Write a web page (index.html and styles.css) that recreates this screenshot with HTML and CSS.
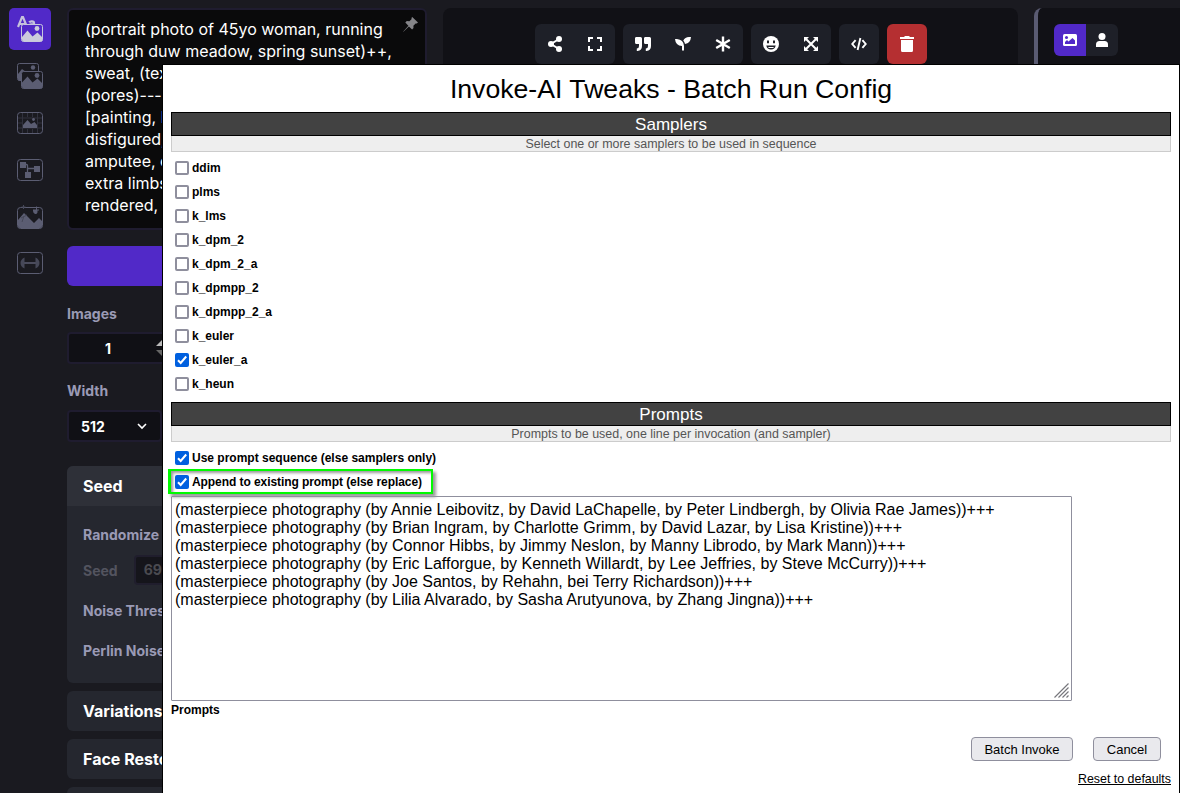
FILE: index.html
```html
<!DOCTYPE html>
<html lang="en">
<head>
<meta charset="utf-8">
<title>Invoke-AI Tweaks</title>
<link rel="stylesheet" href="styles.css">
</head>
<body>
<div class="app">
  <nav class="tabs">
    <div class="tab active"><svg width="26" height="26" viewBox="0 0 26 26"><g fill="none" stroke="#c5c2dc" stroke-width="2.200"><path d="M1 11 5 1.200h1L10 11M2.300 8h6"/><path d="M12.200 6.400c1-1.500 4.800-1.400 4.800.5v3M16.500 8c-2 0-4.500.2-4.500 1.600"/></g><rect x="4.500" y="8.500" width="21" height="17" rx="2" fill="#5129c8" stroke="#c5c5dd"/><path d="M5 21l5.500-6.500 5 6 5-4 5 5v2q0 2-2 2H7q-2 0-2-2z" fill="#cbcbdc"/><circle cx="20" cy="12.500" r="2.400" fill="#cbcbdc"/></svg></div>
    <div class="tab"><svg width="26" height="26" viewBox="0 0 26 26"><rect x=".5" y=".5" width="21" height="17" rx="2" fill="none" stroke="#5b5d72"/><path d="M1 11l4-5 4 3v9H3q-2 0-2-2z" fill="#5b5d72"/><circle cx="16" cy="4.500" r="2.200" fill="#5b5d72"/><rect x="4.500" y="8.500" width="21" height="17" rx="2" fill="#1a1a20" stroke="#5b5d72"/><path d="M5 19.500l5.500-6 5 6 5-4 5 5v3q0 2-2 2H7q-2 0-2-2z" fill="#5b5d72"/><circle cx="20" cy="12.500" r="2.400" fill="#5b5d72"/></svg></div>
    <div class="tab"><svg width="26" height="22" viewBox="0 0 26 22"><rect x=".5" y=".5" width="25" height="21" rx="3" fill="none" stroke="#5b5d72"/><path d="M1 6h24M1 16h24M5.500 1v20M20.500 1v20M10.500 1v4M15.500 1v4M10.500 17v4M15.500 17v4M1 11h4M21 11h4" stroke="#30313d" fill="none"/><path d="M6 13l4.500-5 3.500 4 3.500-2 2.500 3v3H6z" fill="#5b5d72"/><circle cx="16.500" cy="7.500" r="1.400" fill="#5b5d72"/></svg></div>
    <div class="tab low"><svg width="26" height="22" viewBox="0 0 26 22"><rect x=".5" y=".5" width="25" height="21" rx="3" fill="none" stroke="#5b5d72"/><path d="M8 5.500h1.500q1 0 1 1V14M10.500 9.500h8" fill="none" stroke="#5b5d72" stroke-width="1.300"/><path d="M3 3h6v6H3zM17 7h6v6h-6zM8 13h6v6H8z" fill="#5b5d72"/></svg></div>
    <div class="tab low"><svg width="26" height="24" viewBox="0 0 26 24"><rect x=".5" y="2.500" width="25" height="21" rx="3" fill="none" stroke="#5b5d72"/><path d="M1 15l6-7 4 4 6 6 5-5 3 3v5q0 2-2 2H3q-2 0-2-2zM16 4.500h3V1.500h1v3h2v1h-1.500v2q-.8 2-2.500 1.500-2-1-2-3z" fill="#5b5d72"/><path d="M6.500 0v4M4.500 2h4M4 13l6-3M5 17l2-6" stroke="#464858" fill="none"/></svg></div>
    <div class="tab"><svg width="26" height="22" viewBox="0 0 26 22"><rect x=".5" y=".5" width="25" height="21" rx="3" fill="none" stroke="#5b5d72"/><path d="M7 11h12" stroke="#4b4c5d" stroke-width="2"/><path d="M7.500 5.500q-4 2-4 5.500t4 5.500zM18.500 5.500q4 2 4 5.500t-4 5.500z" fill="#464858"/></svg></div>
  </nav>

  <section class="options">
    <div class="prompt">
      <div class="prompt-text">(portrait photo of 45yo woman, running<br>through duw meadow, spring sunset)++,<br>sweat, (tex<br>(pores)----<br>[painting, <span class="link">b</span><br>disfigured,<br>amputee, e<br>extra limbs<br>rendered,</div>
      <svg class="pin" width="15" height="15" viewBox="0 0 15 15"><path d="M9.200 0 15 5.600l-1.300 1-1.100-.2-2.200 2.300.1 2.400-1.400 1.400-3.200-3.100L.7 14.500 0 15l.5-.8 4.900-5.500L2.300 5.600l1.500-1.500 2.600.2 2.300-2.200-.3-1.200z" fill="#858589"/></svg>
    </div>
    <div class="invoke"></div>
    <div class="label images-label">Images</div>
    <div class="number"><span>1</span><svg width="12" height="16" viewBox="0 0 12 16"><path d="M0 6l6-6 6 6z" fill="#bbb"/><path d="M0 10h12l-6 6z" fill="#666"/></svg></div>
    <div class="label width-label">Width</div>
    <div class="select"><span>512</span><svg width="10" height="7" viewBox="0 0 10 7"><path d="M1 1l4 4 4-4" fill="none" stroke="#fff" stroke-width="1.600"/></svg></div>
    <div class="card seed">
      <div class="card-head">Seed</div>
      <div class="card-body">
        <div class="row">Randomize</div>
        <div class="row dim">Seed<span class="seed-input">69</span></div>
        <div class="row">Noise Thres</div>
        <div class="row">Perlin Noise</div>
      </div>
    </div>
    <div class="card fold">Variations</div>
    <div class="card fold">Face Resto</div>
    <div class="card fold"></div>
  </section>

  <section class="viewer">
    <div class="group">
      <span class="btn"><svg width="16" height="16" viewBox="0 0 16 16"><path d="M12 3 4 8l8 5" fill="none" stroke="#fff" stroke-width="2"/><g fill="#fff"><circle cx="12" cy="3" r="3"/><circle cx="4" cy="8" r="3"/><circle cx="12" cy="13" r="3"/></g></svg></span>
      <span class="btn"><svg width="16" height="16" viewBox="0 0 16 16"><path d="M2 6V2h4M10 2h4v4M14 10v4h-4M6 14H2v-4" fill="none" stroke="#fff" stroke-width="2"/></svg></span>
    </div>
    <div class="group">
      <span class="btn"><svg width="16" height="16" viewBox="0 0 16 16"><path d="M1 1h4.500q1.500 0 1.500 1.500V10q0 4.500-4.500 5h-.7v-2.500Q4 12.500 4 10V8H1.500Q0 8 0 6.500v-4Q0 1 1 1zM10 1h4.500Q16 1 16 2.500V10q0 4.500-4.500 5h-.7v-2.500q2.200 0 2.200-2.500V8h-2.500Q9 8 9 6.500v-4Q9 1 10 1z" fill="#fff"/></svg></span>
      <span class="btn"><svg width="16" height="16" viewBox="0 0 16 16"><path d="M0 3h2q6.500.5 7 7v4.500H7V10Q.5 9.500 0 3zM16 1q-.5 6.200-6 7-.3-2-1.700-3.500Q10 1 14 1z" fill="#fff"/></svg></span>
      <span class="btn"><svg width="16" height="16" viewBox="0 0 16 16"><path d="M8 .5v15M1.200 4l13.600 8M1.200 12l13.600-8" stroke="#fff" stroke-width="2.400"/></svg></span>
    </div>
    <div class="group">
      <span class="btn"><svg width="16" height="16" viewBox="0 0 16 16"><circle cx="8" cy="8" r="8" fill="#fff"/><path d="M3.300 9.500h9.400Q12 13.500 8 13.500T3.300 9.500zM4 4.500h2v2.700H4zM10 4.500h2v2.700h-2z" fill="#1e2028"/><path d="M5 11h6l-.8 1H5.800z" fill="#fff"/></svg></span>
      <span class="btn"><svg width="16" height="16" viewBox="0 0 16 16"><path d="M3 3l10 10M13 3 3 13" stroke="#fff" stroke-width="2"/><path d="M1 1h5L1 6zM10 1h5v5zM15 10v5h-5zM1 10l5 5H1z" fill="#fff"/></svg></span>
    </div>
    <div class="group">
      <span class="btn"><svg width="16" height="14" viewBox="0 0 16 14"><path d="M4.600 3.200 1.300 7l3.300 3.800M11.400 3.200 14.700 7l-3.300 3.800M9.400 1 6.600 13" fill="none" stroke="#fff" stroke-width="1.900"/></svg></span>
    </div>
    <div class="group danger">
      <span class="btn"><svg width="14" height="16" viewBox="0 0 14 16"><path d="M0 1h4l1-1h4l1 1h4v2H0zM1 4h12v10.500q0 1.500-1.500 1.500h-9Q1 16 1 14.500z" fill="#fff"/></svg></span>
    </div>
  </section>

  <section class="gallery">
    <div class="toggle">
      <span class="side on"><svg width="14" height="12" viewBox="0 0 14 12"><rect width="14" height="12" rx="1.500" fill="#fff"/><circle cx="3.500" cy="3.500" r="1.500" fill="#5129c8"/><path d="M2 10V8l2-2 1.500 1.500L9.500 4 12 6.500V10z" fill="#5129c8"/></svg></span>
      <span class="side"><svg width="12" height="14" viewBox="0 0 12 14"><circle cx="6" cy="3.500" r="3.500" fill="#fff"/><path d="M0 14v-2.500Q0 8 3.500 8h5Q12 8 12 11.500V14z" fill="#fff"/></svg></span>
    </div>
  </section>
</div>

<div class="dialog">
  <div class="title">Invoke-AI Tweaks - Batch Run Config</div>
  <div class="bar">Samplers</div>
  <div class="sub">Select one or more samplers to be used in sequence</div>
  <div class="checks">
    <div class="check"><i class="box"></i>ddim</div>
    <div class="check"><i class="box"></i>plms</div>
    <div class="check"><i class="box"></i>k_lms</div>
    <div class="check"><i class="box"></i>k_dpm_2</div>
    <div class="check"><i class="box"></i>k_dpm_2_a</div>
    <div class="check"><i class="box"></i>k_dpmpp_2</div>
    <div class="check"><i class="box"></i>k_dpmpp_2_a</div>
    <div class="check"><i class="box"></i>k_euler</div>
    <div class="check"><i class="box checked"><svg width="14" height="14" viewBox="0 0 14 14"><path d="M3 7.200 5.700 10l5.500-6.500" fill="none" stroke="#fff" stroke-width="2"/></svg></i>k_euler_a</div>
    <div class="check"><i class="box"></i>k_heun</div>
  </div>
  <div class="bar second">Prompts</div>
  <div class="sub">Prompts to be used, one line per invocation (and sampler)</div>
  <div class="checks">
    <div class="check"><i class="box checked"><svg width="14" height="14" viewBox="0 0 14 14"><path d="M3 7.200 5.700 10l5.500-6.500" fill="none" stroke="#fff" stroke-width="2"/></svg></i>Use prompt sequence (else samplers only)</div>
    <div class="check marked"><i class="box checked"><svg width="14" height="14" viewBox="0 0 14 14"><path d="M3 7.200 5.700 10l5.500-6.500" fill="none" stroke="#fff" stroke-width="2"/></svg></i>Append to existing prompt (else replace)</div>
  </div>
  <div class="area">
    <div class="line">(masterpiece photography (by Annie Leibovitz, by David LaChapelle, by Peter Lindbergh, by Olivia Rae James))+++</div>
    <div class="line">(masterpiece photography (by Brian Ingram, by Charlotte Grimm, by David Lazar, by Lisa Kristine))+++</div>
    <div class="line">(masterpiece photography (by Connor Hibbs, by Jimmy Neslon, by Manny Librodo, by Mark Mann))+++</div>
    <div class="line">(masterpiece photography (by Eric Lafforgue, by Kenneth Willardt, by Lee Jeffries, by Steve McCurry))+++</div>
    <div class="line">(masterpiece photography (by Joe Santos, by Rehahn, bei Terry Richardson))+++</div>
    <div class="line">(masterpiece photography (by Lilia Alvarado, by Sasha Arutyunova, by Zhang Jingna))+++</div>
    <svg class="grip" width="15" height="15" viewBox="0 0 15 15"><path d="M.5 14.500 14.500.5M4.500 14.500l10-10M8.500 14.500l6-6M12.500 14.500l2-2" stroke="#77777c" stroke-width="1.200"/></svg>
  </div>
  <div class="area-label">Prompts</div>
  <div class="buttons"><span class="button wide">Batch Invoke</span><span class="button">Cancel</span></div>
  <div class="reset"><span>Reset to defaults</span></div>
</div>
</body>
</html>
```
FILE: styles.css
```css
* { box-sizing: border-box; }
body { margin: 0; width: 1180px; height: 793px; overflow: hidden; position: relative; background: #1a1a20; font-family: Inter, sans-serif; font-feature-settings: "calt" 0; }
svg { display: block; flex: none; }
.app { display: flex; height: 793px; overflow: hidden; }

.tabs { width: 67px; flex: none; padding: 8px 0 0 9px; display: flex; flex-direction: column; gap: 4.800px; }
.tab { width: 42px; height: 42px; flex: none; border-radius: 5px; display: flex; align-items: center; justify-content: center; }
.tab.active { background: #5129c8; }
.tab.low { padding-top: 2px; }

.options { width: 360px; flex: none; padding-top: 8px; color: #fff; }
.prompt { position: relative; height: 222px; border: 2px solid #1f1c2f; border-radius: 6px; background: #0a0a0b; padding: 8px 16px; font-size: 16px; line-height: 22px; white-space: nowrap; }
.link { color: #2a78c0; }
.pin { position: absolute; right: 7px; top: 7px; }
.invoke { height: 40px; margin-top: 16px; border-radius: 6px; background: #5129c8; }
.label { font-size: 14px; font-weight: 700; line-height: 20px; color: #9a9ab5; }
.images-label { margin-top: 18px; }
.width-label { margin-top: 17px; }
.number, .select { height: 32px; width: 110px; margin-top: 8px; border: 2px solid #1f1c2f; border-radius: 4px; background: #101015; display: flex; align-items: center; font-size: 14px; font-weight: 700; }
.number { padding-left: 36px; gap: 45px; }
.select { width: 95px; margin-top: 9px; padding: 0 13px 0 12px; justify-content: space-between; }
.card { background: #25272f; border-radius: 6px; overflow: hidden; font-weight: 700; font-size: 16px; }
.seed { height: 217px; margin-top: 24px; }
.card-head { height: 40px; line-height: 40px; padding-left: 16px; background: #2e3038; }
.card-body { padding: 8px 16px; }
.row { height: 40px; display: flex; align-items: center; color: #9a9ab5; font-size: 14px; font-weight: 650; white-space: nowrap; }
.row:nth-child(2) { height: 32px; }
.row:nth-child(3) { margin-top: 4px; }
.row.dim { color: #53545f; }
.seed-input { height: 30px; width: 120px; margin-left: 16px; border: 2px solid #201e2d; border-radius: 4px; background: #15151b; padding-left: 8px; line-height: 26px; color: #4a4a50; }
.fold { height: 40px; margin-top: 8px; line-height: 40px; padding-left: 16px; white-space: nowrap; }

.viewer { width: 575px; height: 785px; flex: none; margin: 8px 0 0 16px; padding: 16px 0 0 92px; border-radius: 8px; background: #111116; display: flex; gap: 8px; }
.group { height: 40px; display: flex; border-radius: 6px; background: #1e2028; overflow: hidden; }
.group.danger { background: #b52f31; }
.btn { width: 40px; height: 40px; display: flex; align-items: center; justify-content: center; }
.gallery { flex: 1; margin: 8px 0 0 16px; border-left: 4px solid #5a5b72; border-radius: 8px 0 0 0; background: #111116; padding: 16px; }
.toggle { display: flex; width: 64px; height: 32px; border-radius: 6px; overflow: hidden; background: #1e2028; }
.side { width: 32px; display: flex; align-items: center; justify-content: center; }
.side.on { background: #5129c8; }

/* Batch dialog floats over the application */
.dialog { position: absolute; left: 162px; top: 64px; width: 1018px; height: 740px; border: 1px solid #000; background: #fff; padding: 0 8px; font-family: "Liberation Sans", Arial, sans-serif; color: #000; }
.title { height: 47px; line-height: 48px; text-align: center; font-size: 26.650px; }
.bar { height: 24px; border: 1px solid #000; background: #424242; color: #fff; text-align: center; font-size: 17px; line-height: 23px; }
.bar.second { margin-top: 6px; }
.sub { height: 16px; border: 1px solid #ccc; border-top: 0; background: #eee; color: #555; text-align: center; font-size: 12.450px; line-height: 16px; }
.checks { padding-top: 4px; }
.check { height: 24px; display: flex; align-items: center; padding-left: 4px; gap: 3px; font-size: 12px; font-weight: 700; white-space: nowrap; }
.box { width: 14px; height: 14px; border: 2px solid #8f8f9d; border-radius: 2px; background: #fff; }
.box.checked { border: 0; background: #0060df; }
.marked { width: 265px; height: 25px; margin: -1px 0 0 -3px; padding-left: 4px; border: 2px solid #00fa00; border-width: 2px 2px 2px 3px; letter-spacing: -.07px; box-shadow: 3px 3px 3px rgba(0,0,0,.4), inset 2px 2px 3px rgba(0,0,0,.4); }
.area { position: relative; width: 901px; height: 205px; margin-top: 2px; border: 1px solid #8f8f9d; border-radius: 1px; padding: 4px 3px; font-size: 16px; line-height: 18px; white-space: nowrap; }
.grip { position: absolute; right: 2px; bottom: 2px; }
.area-label { font-size: 12px; line-height: 18px; font-weight: 700; }
.buttons { display: flex; justify-content: flex-end; gap: 20px; margin-top: 18px; padding-right: 10px; }
.button { width: 68px; height: 24px; border: 1px solid #8f8f9d; border-radius: 4px; background: #e9e9ed; text-align: center; font-size: 13px; line-height: 23px; }
.button.wide { width: 102px; }
.reset { margin-top: 10px; text-align: right; font-size: 12.400px; line-height: 17px; text-decoration: underline; }
```
